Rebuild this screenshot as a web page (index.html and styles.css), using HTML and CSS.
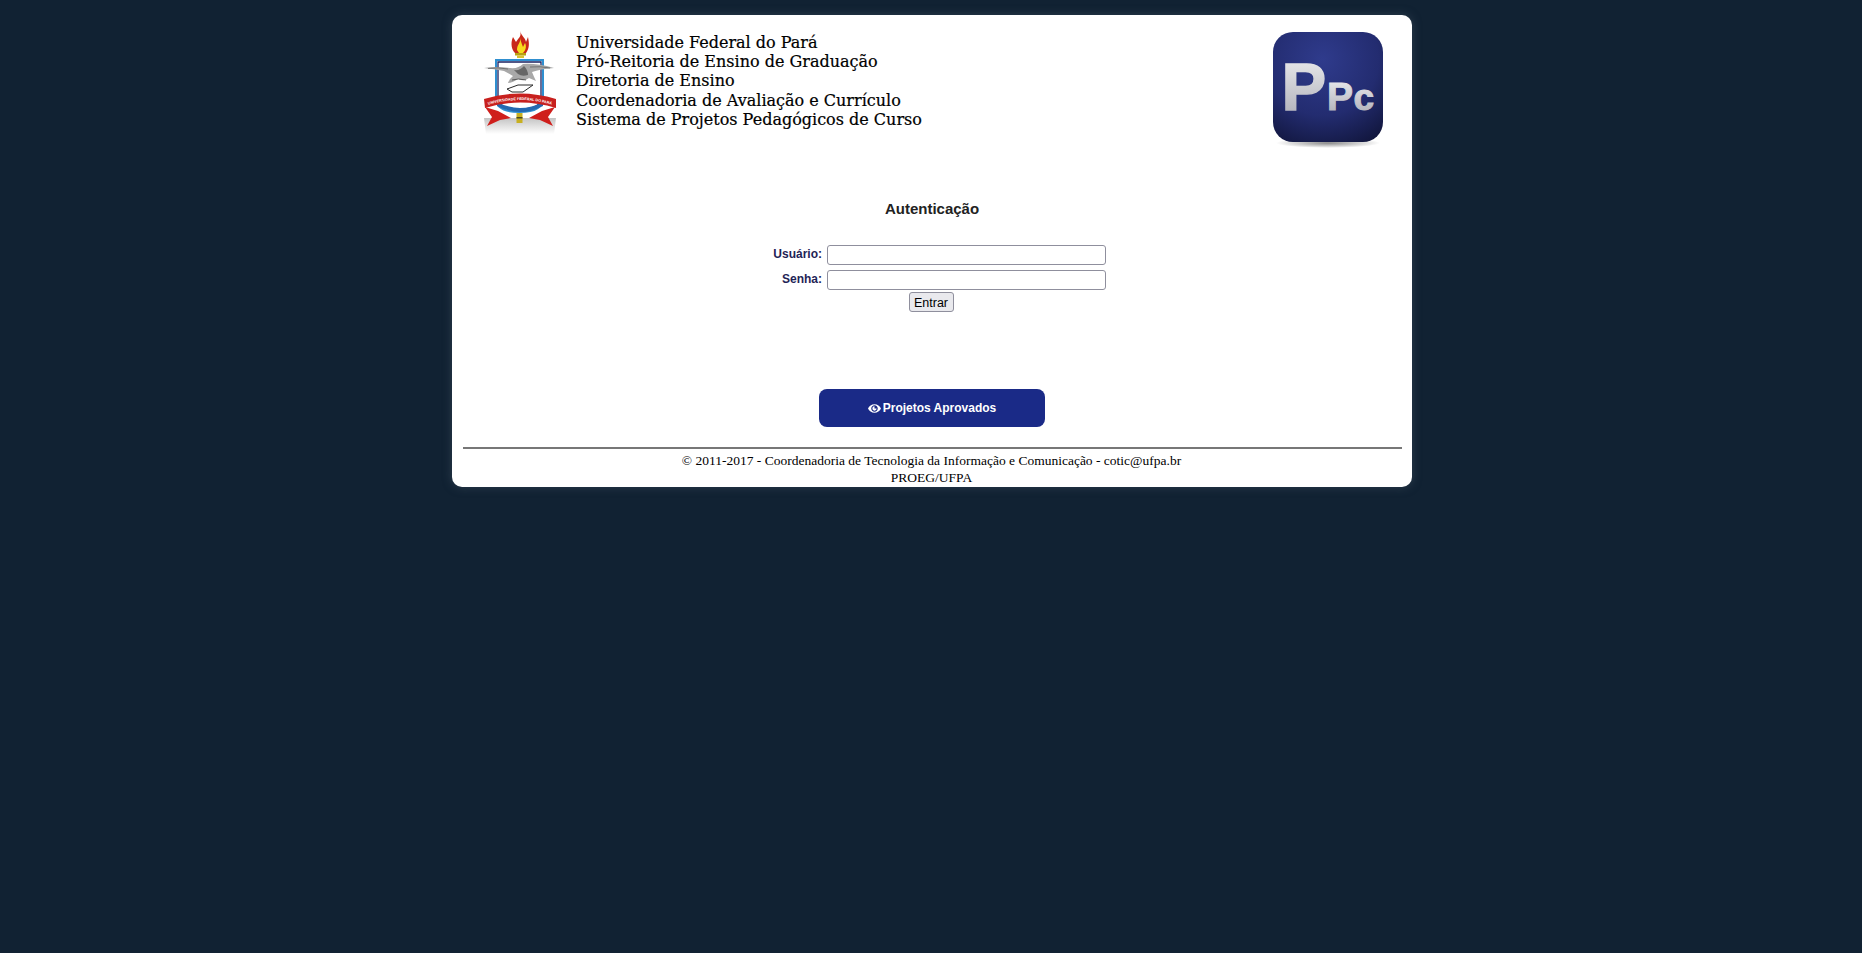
FILE: index.html
```html
<!DOCTYPE html>
<html lang="pt-BR">
<head>
    <meta charset="utf-8">
    <title>Sistema de Projetos Pedagógicos de Curso</title>
    <link rel="stylesheet" href="styles.css">
</head>
<body>
    <div class="pagina">
        <header class="topo">
            <svg class="brasao" viewBox="0 0 76 104" width="76" height="104" aria-label="Brasão UFPA">
                <defs>
                    <linearGradient id="sombra" x1="0" y1="0" x2="0" y2="1">
                        <stop offset="0" stop-color="#c4c4c4"/>
                        <stop offset="1" stop-color="#fff"/>
                    </linearGradient>
                    <path id="curvaFaixa" d="M4 75.500 Q38 64.500 72 75.500"/>
                </defs>
                <path d="M2 88 H74 L72 104 H4Z" fill="url(#sombra)"/>
                <!-- tocha -->
                <path d="M38 1 C40 7 36 8 34 12 C33 10 32 9 31 7 C28 14 30 20 33 23 H44 C48 18 47 12 46 7 L44 12 C43 7 40 7 38 1Z" fill="#c8281a"/>
                <path d="M38 8 C39 13 35 14 35 20 L37 23 H41 C45 19 44 15 43 13 L41 17 C40 14 39 12 38 8Z" fill="#f7dc1e"/>
                <rect x="33" y="23" width="11" height="2.500" fill="#b8a010"/>
                <rect x="35" y="25.500" width="7" height="2.500" fill="#d8c430"/>
                <!-- escudo -->
                <path d="M14 30 H61 V68 Q61 82 37.500 82 Q14 82 14 68Z" fill="#fff" stroke="#2f8fd0" stroke-width="2"/>
                <path d="M16 32 H59 V68 Q59 79 37.500 79 Q16 79 16 68Z" fill="#fff" stroke="#1a2060" stroke-width="1.300"/>
                <!-- aguia e livro -->
                <path d="M25 59 L36 55 H51 L41 62 H30Z" fill="#fff" stroke="#2a2a2a" stroke-width="1"/>
                <path d="M2 38 Q14 36 28 38 Q36 39 41 34 Q54 33 72 38 Q58 39 50 42 Q52 47 54 51 L47 48 Q42 52 36 49 Q30 53 26 53 Q28 48 31 46 Q26 43 22 41 Q12 39 2 38Z" fill="#a8a8a8"/>
                <path d="M32 40 Q38 41 42 36 Q46 40 46 45 Q40 47 36 44Z" fill="#666"/>
                <path d="M6 38.500 Q16 37 26 39" fill="none" stroke="#5a5a5a" stroke-width="0.700"/>
                <path d="M48 37 Q58 36 68 38" fill="none" stroke="#5a5a5a" stroke-width="0.700"/>
                <path d="M30 50 Q36 48 44 50" fill="none" stroke="#444" stroke-width="0.800"/>
                <!-- faixa -->
                <path d="M3 77 L16 81 L29 88 L18 90 L5 96 L10 87Z" fill="#cf1f1c"/>
                <path d="M73 77 L60 81 L47 88 L58 90 L71 96 L66 87Z" fill="#cf1f1c"/>
                <path d="M15 72 Q38 84 61 72 L61 76 Q38 88 15 76Z" fill="#2468b0"/>
                <path d="M2 69 Q38 58 74 69 L74 78 Q38 67 3 78Z" fill="#c8201e"/>
                <text class="faixa-texto"><textPath href="#curvaFaixa" startOffset="50%" text-anchor="middle">UNIVERSIDADE FEDERAL DO PARÁ</textPath></text>
                <rect x="34.500" y="83" width="6" height="10" fill="#c8b020"/>
                <rect x="34.500" y="87" width="6" height="1.500" fill="#4a4a20"/>
            </svg>
            <div class="instituicao">
                <div>Universidade Federal do Pará</div>
                <div>Pró-Reitoria de Ensino de Graduação</div>
                <div>Diretoria de Ensino</div>
                <div>Coordenadoria de Avaliação e Currículo</div>
                <div>Sistema de Projetos Pedagógicos de Curso</div>
            </div>
            <svg class="logo-ppc" viewBox="0 0 118 120" width="118" height="120" aria-label="PPc">
                <defs>
                    <radialGradient id="fundoPpc" cx="0.45" cy="0.25" r="0.85">
                        <stop offset="0" stop-color="#2f3b8c"/>
                        <stop offset="0.6" stop-color="#232c70"/>
                        <stop offset="1" stop-color="#12173f"/>
                    </radialGradient>
                    <linearGradient id="letraPpc" x1="0" y1="0" x2="0" y2="1">
                        <stop offset="0" stop-color="#f0f0f2"/>
                        <stop offset="1" stop-color="#a9aab4"/>
                    </linearGradient>
                    <radialGradient id="sombraPpc" cx="0.5" cy="0.5" r="0.5">
                        <stop offset="0" stop-color="#8a8a8a"/>
                        <stop offset="1" stop-color="#fff"/>
                    </radialGradient>
                </defs>
                <ellipse cx="59" cy="111" rx="52" ry="5" fill="url(#sombraPpc)"/>
                <rect x="4" y="0" width="110" height="110" rx="20" fill="url(#fundoPpc)"/>
                <text class="ppc-grande" x="12.500" y="78" fill="url(#letraPpc)" stroke="url(#letraPpc)">P</text>
                <text class="ppc-medio" x="58" y="78" fill="url(#letraPpc)" stroke="url(#letraPpc)">P</text>
                <text class="ppc-pequeno" x="84.500" y="78" fill="url(#letraPpc)" stroke="url(#letraPpc)">c</text>
            </svg>
        </header>

        <h2 class="titulo">Autenticação</h2>

        <form class="login">
            <label for="usuario">Usuário:</label>
            <input type="text" id="usuario">
            <label for="senha">Senha:</label>
            <input type="password" id="senha">
            <div class="acoes">
                <button type="button" class="entrar">Entrar</button>
            </div>
        </form>

        <a href="#" class="aprovados">
            <svg class="olho" viewBox="0 0 24 16" width="13" height="9" aria-hidden="true">
                <path d="M12 0C6.500 0 2.200 3.400 0 8c2.200 4.600 6.500 8 12 8s9.800-3.400 12-8c-2.200-4.600-6.500-8-12-8zm0 14c-3.300 0-6-2.700-6-6s2.700-6 6-6 6 2.700 6 6-2.700 6-6 6zm0-10a4 4 0 1 0 4 4h-4z" fill="#fff"/>
            </svg>
            Projetos Aprovados
        </a>

        <footer class="rodape">
            <div>© 2011-2017 - Coordenadoria de Tecnologia da Informação e Comunicação - cotic@ufpa.br</div>
            <div>PROEG/UFPA</div>
        </footer>
    </div>
</body>
</html>
```

FILE: styles.css
```css
body {
    margin: 0;
    padding-left: 2px;
    min-height: 953px;
    background-color: #112233;
    font-family: "Liberation Sans", Arial, sans-serif;
    color: #222;
}

.pagina {
    width: 960px;
    height: 472px;
    margin: 15px auto 0;
    box-sizing: border-box;
    padding: 0 11px;
    background-color: #fff;
    border-radius: 10px;
    box-shadow: 0 0 10px rgba(70, 85, 100, 0.55);
}

.topo {
    display: flex;
    align-items: flex-start;
    height: 150px;
    padding: 15px 14px 0 19px;
}

.brasao {
    flex: none;
    margin-right: 18px;
}

.instituicao {
    flex: 1;
    padding-top: 3px;
    font-family: "DejaVu Serif", serif;
    font-size: 16px;
    line-height: 19.2px;
    color: #000;
    -webkit-text-stroke: 0.2px #000;
}

.logo-ppc {
    flex: none;
    margin-top: 2px;
}

.faixa-texto {
    font-family: "Liberation Sans", sans-serif;
    font-size: 3.7px;
    font-weight: bold;
    fill: #fff;
}

.ppc-grande {
    font-family: "Liberation Sans", sans-serif;
    font-size: 67px;
    font-weight: bold;
    stroke-width: 1.5;
}

.ppc-medio {
    font-family: "Liberation Sans", sans-serif;
    font-size: 39px;
    font-weight: bold;
    stroke-width: 1;
}

.ppc-pequeno {
    font-family: "Liberation Sans", sans-serif;
    font-size: 37px;
    font-weight: bold;
    stroke-width: 1;
}

.titulo {
    margin: 20px 0 0;
    text-align: center;
    font-size: 15px;
    line-height: 18px;
    font-weight: bold;
    color: #222;
}

.login {
    display: grid;
    grid-template-columns: 64px 279px;
    column-gap: 5px;
    row-gap: 5px;
    align-items: center;
    justify-content: center;
    margin-top: 27px;
}

.login label {
    margin-bottom: 2px;
    text-align: right;
    font-size: 12px;
    font-weight: bold;
    color: #1f2456;
}

.login input {
    box-sizing: border-box;
    width: 279px;
    height: 20px;
    margin: 0;
    padding: 1px 2px;
    border: 1px solid #8f8f9d;
    border-radius: 3px;
    background-color: #fff;
}

.acoes {
    grid-column: 1 / -1;
    margin-top: -3px;
    padding-right: 2px;
    text-align: center;
}

.entrar {
    box-sizing: border-box;
    width: 45px;
    height: 20px;
    padding: 1px 0 0;
    font-family: "Liberation Sans", Arial, sans-serif;
    font-size: 12.5px;
    color: #000;
    background-color: #e9e9ed;
    border: 1px solid #8f8f9d;
    border-radius: 3px;
}

.aprovados {
    display: flex;
    align-items: center;
    justify-content: center;
    gap: 2px;
    width: 226px;
    height: 38px;
    margin: 77px auto 0;
    background-color: #1a2a87;
    border-radius: 8px;
    color: #fff;
    font-size: 12px;
    font-weight: bold;
    text-decoration: none;
}

.rodape {
    margin: 20px -1px 0 0;
    border-top: 2px solid #777;
    text-align: center;
    font-family: "Liberation Serif", serif;
    font-size: 13.5px;
    line-height: 17px;
    padding: 3px 2px 0 0;
    color: #000;
}
```
